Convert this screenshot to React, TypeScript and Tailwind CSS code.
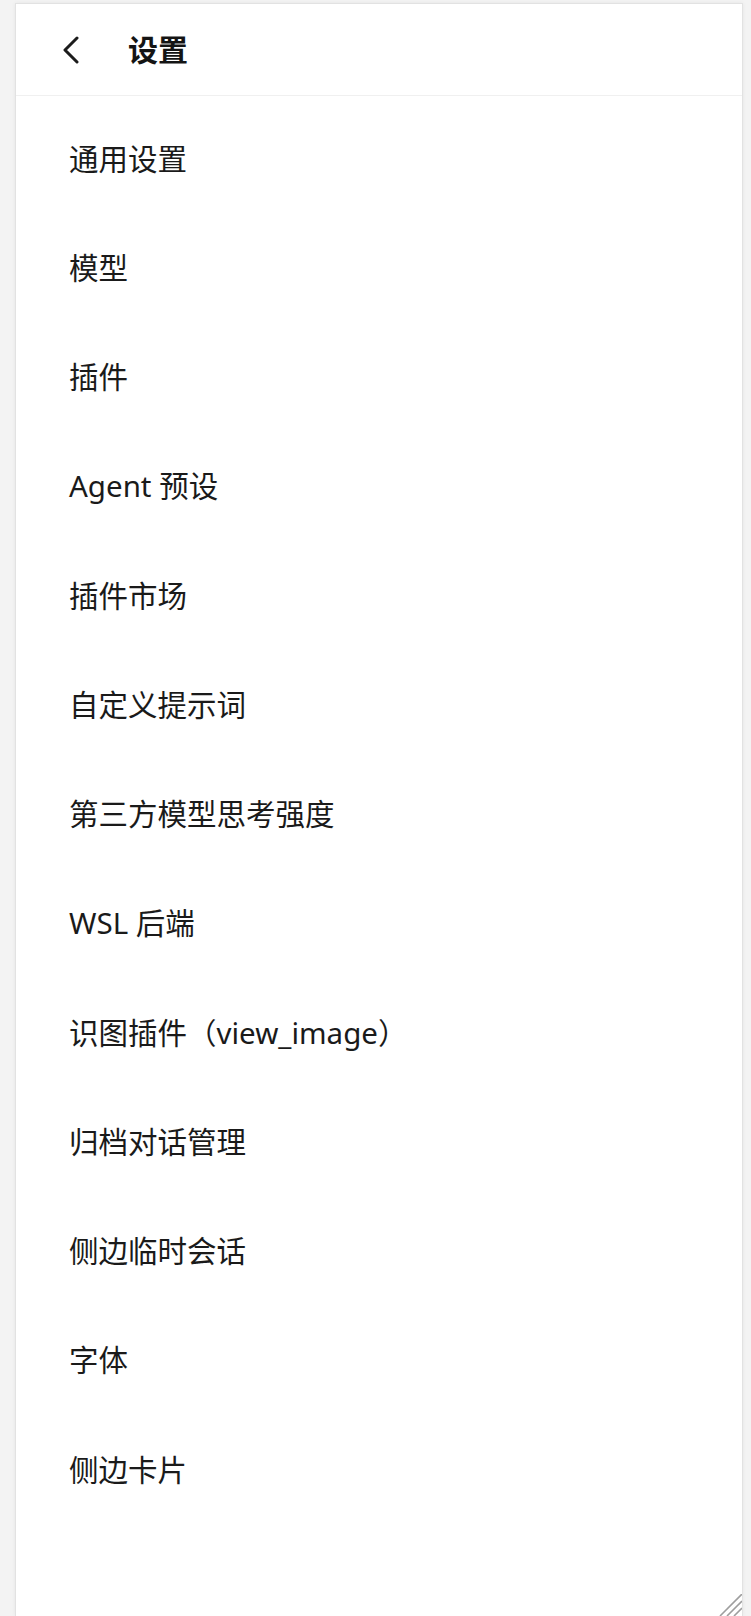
const items = [
  '通用设置',
  '模型',
  '插件',
  'Agent 预设',
  '插件市场',
  '自定义提示词',
  '第三方模型思考强度',
  'WSL 后端',
  '识图插件（view_image）',
  '归档对话管理',
  '侧边临时会话',
  '字体',
  '侧边卡片',
]

export default function App() {
  return (
    <div
      className="h-[1616px] overflow-hidden bg-[#f3f3f3]"
      style={{ fontFamily: '"Noto Sans", "Noto Sans CJK SC", sans-serif' }}
    >
      <div className="relative ml-[15px] mt-[3px] h-[1613px] w-[728px] border-x border-t border-[#e2e2e2] bg-white shadow-[0_0_4px_rgba(0,0,0,0.06)]">
        {/* Header */}
        <div className="flex h-[92px] items-center border-b border-[#f0f0f0]">
          <button className="ml-[46px] flex h-[28px] w-[18px] items-center justify-center text-[#1c1c1c]">
            <svg width="16" height="28" viewBox="0 0 16 28" fill="none">
              <polyline
                points="14,2 2,14 14,26"
                stroke="currentColor"
                strokeWidth="3"
                strokeLinecap="round"
                strokeLinejoin="round"
              />
            </svg>
          </button>
          <h1 className="ml-[48px] text-[30px] font-semibold text-[#141414]">设置</h1>
        </div>

        {/* Menu */}
        <ul className="pt-[8px]">
          {items.map((label) => (
            <li
              key={label}
              className="flex h-[109.25px] items-center pl-[53px] text-[29.5px] text-[#1a1a1a]"
            >
              {label}
            </li>
          ))}
        </ul>

        {/* Resize grip */}
        <svg
          className="absolute bottom-0 right-0"
          width="24"
          height="22"
          viewBox="0 0 24 22"
        >
          <line x1="2" y1="22" x2="24" y2="0" stroke="#9e9e9e" strokeWidth="1.6" />
          <line x1="9" y1="22" x2="24" y2="7" stroke="#9e9e9e" strokeWidth="1.6" />
          <line x1="16" y1="22" x2="24" y2="14" stroke="#9e9e9e" strokeWidth="1.6" />
        </svg>
      </div>
    </div>
  )
}
